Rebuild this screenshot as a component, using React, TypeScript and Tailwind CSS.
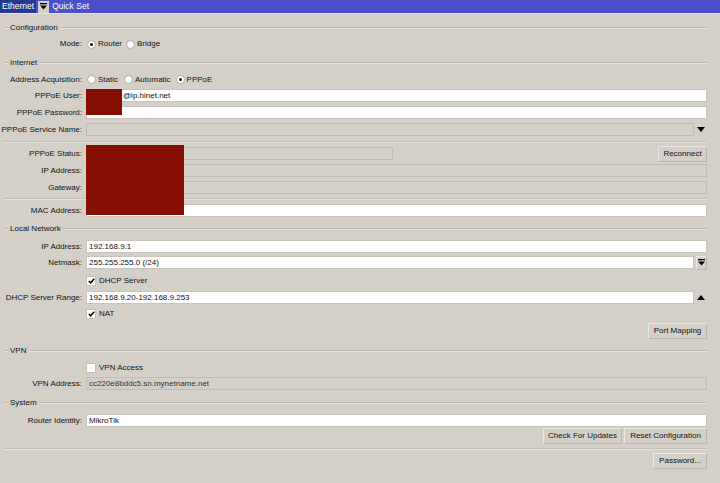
import React from "react";

const FONT = { fontFamily: '"Liberation Sans", Arial, sans-serif' };

function Label({ children }: { children?: React.ReactNode }) {
  return (
    <div className="w-[80px] shrink-0 flex justify-end pr-[2px] whitespace-nowrap">
      {children}
    </div>
  );
}

function Row({ h, children }: { h: string; children?: React.ReactNode }) {
  return <div className={`flex items-center ${h}`}>{children}</div>;
}

function TextBox({ value, className = "", padLeft = "" }: { value?: string; className?: string; padLeft?: string }) {
  return (
    <div
      className={`ml-[2px] h-[13px] bg-white border border-[#c9c5bd] flex items-center ${padLeft || "pl-[2px]"} whitespace-nowrap overflow-hidden ${className}`}
    >
      {value}
    </div>
  );
}

function Disabled({ value, className = "" }: { value?: string; className?: string }) {
  return (
    <div
      className={`ml-[2px] h-[13px] bg-[#d4d0c8] border border-[#bfbbb3] flex items-center pl-[2px] whitespace-nowrap overflow-hidden text-[#333] ${className}`}
    >
      {value}
    </div>
  );
}

function Radio({ on, label, gap = "mr-[6px]" }: { on?: boolean; label: string; gap?: string }) {
  return (
    <div className={`flex items-center ${gap}`}>
      <div className="w-[9px] h-[9px] rounded-full bg-white border border-[#b0aca4] flex items-center justify-center">
        {on && <div className="w-[3px] h-[3px] rounded-full bg-black" />}
      </div>
      <span className="ml-[2px]">{label}</span>
    </div>
  );
}

function Check({ on, label }: { on?: boolean; label: string }) {
  return (
    <div className="flex items-center ml-[2px]">
      <div className="w-[10px] h-[10px] bg-white border border-[#c4c0b8] flex items-center justify-center">
        {on && (
          <svg width="7" height="6" viewBox="0 0 7 6">
            <path d="M0.8 3 L2.6 4.8 L6.2 0.8" stroke="#000" strokeWidth="1.5" fill="none" />
          </svg>
        )}
      </div>
      <span className="ml-[3px]">{label}</span>
    </div>
  );
}

function Section({ title, h }: { title: string; h: string }) {
  return (
    <div className={`flex items-center ${h}`}>
      <div className="w-[4px] h-[2px] border-t border-[#bcb8b0] border-b border-b-[#e4e1da]" />
      <span className="px-[2px]">{title}</span>
      <div className="flex-1 h-[2px] border-t border-[#bcb8b0] border-b border-b-[#e4e1da]" />
    </div>
  );
}

function Sep({ h }: { h: string }) {
  return (
    <div className={`flex items-center ${h}`}>
      <div className="flex-1 h-[2px] border-t border-[#c2beb6] border-b border-b-[#e4e1da]" />
    </div>
  );
}

function Btn({ children, className = "" }: { children: React.ReactNode; className?: string }) {
  return (
    <div
      className={`h-[16px] px-[4px] flex items-center justify-center bg-[#d4d0c8] border border-[#bab6ae] border-t-[#ece9e3] border-l-[#ece9e3] whitespace-nowrap ${className}`}
    >
      {children}
    </div>
  );
}

function DownBar() {
  return (
    <svg width="7" height="7" viewBox="0 0 7 7">
      <rect x="0" y="0" width="7" height="1.3" fill="#000" />
      <path d="M0 2.5 H7 L3.5 6.5 Z" fill="#000" />
    </svg>
  );
}

export default function App() {
  return (
    <div className="w-[720px] h-[483px] bg-[#d4d0c8] text-[8px] text-[#111] overflow-hidden" style={FONT}>
      {/* title bar */}
      <div className="h-[14px] bg-[#4b4fcc] border-b border-[#e9e5d8] flex items-center">
        <div className="h-[13px] bg-[#233a8f] text-white px-[2px] flex items-center text-[8.5px]">Ethernet</div>
        <div className="ml-[2px] h-[12px] w-[11px] bg-[#d4d0c8] flex items-center justify-center">
          <DownBar />
        </div>
        <span className="ml-[3px] text-white text-[8.5px]">Quick Set</span>
      </div>

      <div className="relative pl-[4px] pr-[13px] pt-[7px]">
        <Section title="Configuration" h="h-[14px]" />
        <Row h="h-[18px]">
          <Label>Mode:</Label>
          <div className="ml-[3px] flex items-center">
            <Radio on label="Router" gap="mr-[4px]" />
            <Radio label="Bridge" />
          </div>
        </Row>

        <Section title="Internet" h="h-[19px]" />
        <Row h="h-[15px]">
          <Label>Address Acquisition:</Label>
          <div className="ml-[3px] flex items-center">
            <Radio label="Static" />
            <Radio label="Automatic" gap="mr-[5px]" />
            <Radio on label="PPPoE" />
          </div>
        </Row>
        <Row h="h-[17px]">
          <Label>PPPoE User:</Label>
          <TextBox value="@ip.hinet.net" padLeft="pl-[36px]" className="flex-1" />
        </Row>
        <Row h="h-[17px]">
          <Label>PPPoE Password:</Label>
          <TextBox className="flex-1" />
        </Row>
        <Row h="h-[17px]">
          <Label>PPPoE Service Name:</Label>
          <Disabled className="flex-1" />
          <div className="w-[13px] flex justify-center">
            <svg width="8" height="5" viewBox="0 0 8 5">
              <path d="M0 0 H8 L4 5 Z" fill="#000" />
            </svg>
          </div>
        </Row>
        <Sep h="h-[7px]" />
        <Row h="h-[17px]">
          <Label>PPPoE Status:</Label>
          <Disabled className="w-[307px]" />
          <div className="flex-1" />
          <Btn className="w-[49px]">Reconnect</Btn>
        </Row>
        <Row h="h-[17px]">
          <Label>IP Address:</Label>
          <Disabled className="flex-1" />
        </Row>
        <Row h="h-[17px]">
          <Label>Gateway:</Label>
          <Disabled className="flex-1" />
        </Row>
        <Sep h="h-[6px]" />
        <Row h="h-[17px]">
          <Label>MAC Address:</Label>
          <TextBox className="flex-1" />
        </Row>

        <Section title="Local Network" h="h-[20px]" />
        <Row h="h-[15px]">
          <Label>IP Address:</Label>
          <TextBox value="192.168.9.1" className="flex-1" />
        </Row>
        <Row h="h-[17px]">
          <Label>Netmask:</Label>
          <TextBox value="255.255.255.0 (/24)" className="flex-1" />
          <div className="ml-[2px] w-[11px] h-[14px] bg-[#d4d0c8] border border-[#bab6ae] border-t-[#ece9e3] border-l-[#ece9e3] flex items-center justify-center">
            <DownBar />
          </div>
        </Row>
        <Row h="h-[19px]">
          <Label />
          <Check on label="DHCP Server" />
        </Row>
        <Row h="h-[15px]">
          <Label>DHCP Server Range:</Label>
          <TextBox value="192.168.9.20-192.168.9.253" className="flex-1" />
          <div className="w-[13px] flex justify-center">
            <svg width="8" height="5" viewBox="0 0 8 5">
              <path d="M0 5 H8 L4 0 Z" fill="#000" />
            </svg>
          </div>
        </Row>
        <Row h="h-[17px]">
          <Label />
          <Check on label="NAT" />
        </Row>
        <Row h="h-[18px]">
          <div className="flex-1" />
          <Btn className="w-[59px]">Port Mapping</Btn>
        </Row>

        <Section title="VPN" h="h-[21px]" />
        <Row h="h-[14px]">
          <Label />
          <Check label="VPN Access" />
        </Row>
        <Row h="h-[17px]">
          <Label>VPN Address:</Label>
          <Disabled value="cc220e8bddc5.sn.mynetname.net" className="flex-1" />
        </Row>

        <Section title="System" h="h-[22px]" />
        <Row h="h-[13px]">
          <Label>Router Identity:</Label>
          <TextBox value="MikroTik" className="flex-1" />
        </Row>
        <Row h="h-[18px]">
          <div className="flex-1" />
          <Btn className="w-[79px]">Check For Updates</Btn>
          <Btn className="ml-[2px] w-[83px]">Reset Configuration</Btn>
        </Row>
        <Sep h="h-[8px]" />
        <Row h="h-[16px]">
          <div className="flex-1" />
          <Btn className="w-[54px]">Password...</Btn>
        </Row>

        {/* redactions */}
        <div className="absolute left-[86px] top-[75px] w-[36px] h-[26px] bg-[#850f02]" />
        <div className="absolute left-[86px] top-[131px] w-[98px] h-[70px] bg-[#850f02]" />
      </div>
    </div>
  );
}
